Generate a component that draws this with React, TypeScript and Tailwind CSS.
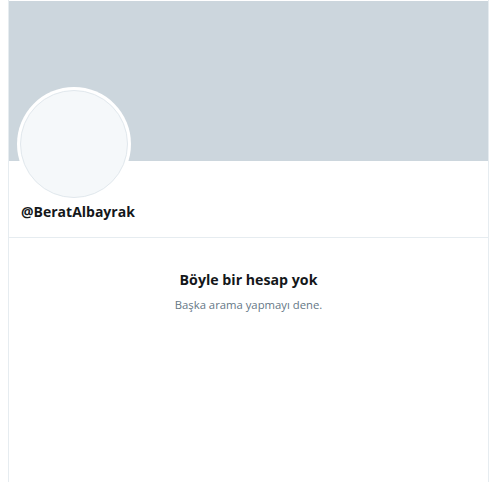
import React from 'react';

export default function App() {
  return (
    <div className="w-[497px] h-[482px] bg-white overflow-hidden font-['Open_Sans','Noto_Sans',sans-serif]">
      <div className="ml-[8px] w-[481px] h-full border-x border-[#e6ecf0] pt-px">
        <div className="h-[160px] bg-[#ccd6dd]" />
        <div className="px-2">
          <div className="-mt-[74px] w-[114px] h-[114px] rounded-full bg-white p-[3px]">
            <div className="w-full h-full rounded-full bg-[#f5f8fa] border border-[#e1e8ed]" />
          </div>
          <div className="pl-[4px] pt-[1px] pb-[15px] text-[14px] font-bold leading-[20px] text-[#14171a]">
            @BeratAlbayrak
          </div>
        </div>
        <div className="border-t border-[#e6ecf0]" />
        <div className="pt-[32px] flex flex-col items-center">
          <h2 className="text-[14.2px] font-bold leading-[20px] text-[#14171a]">
            Böyle bir hesap yok
          </h2>
          <p className="mt-[7px] text-[11.3px] leading-[16px] text-[#657786]">
            Başka arama yapmayı dene.
          </p>
        </div>
      </div>
    </div>
  );
}
